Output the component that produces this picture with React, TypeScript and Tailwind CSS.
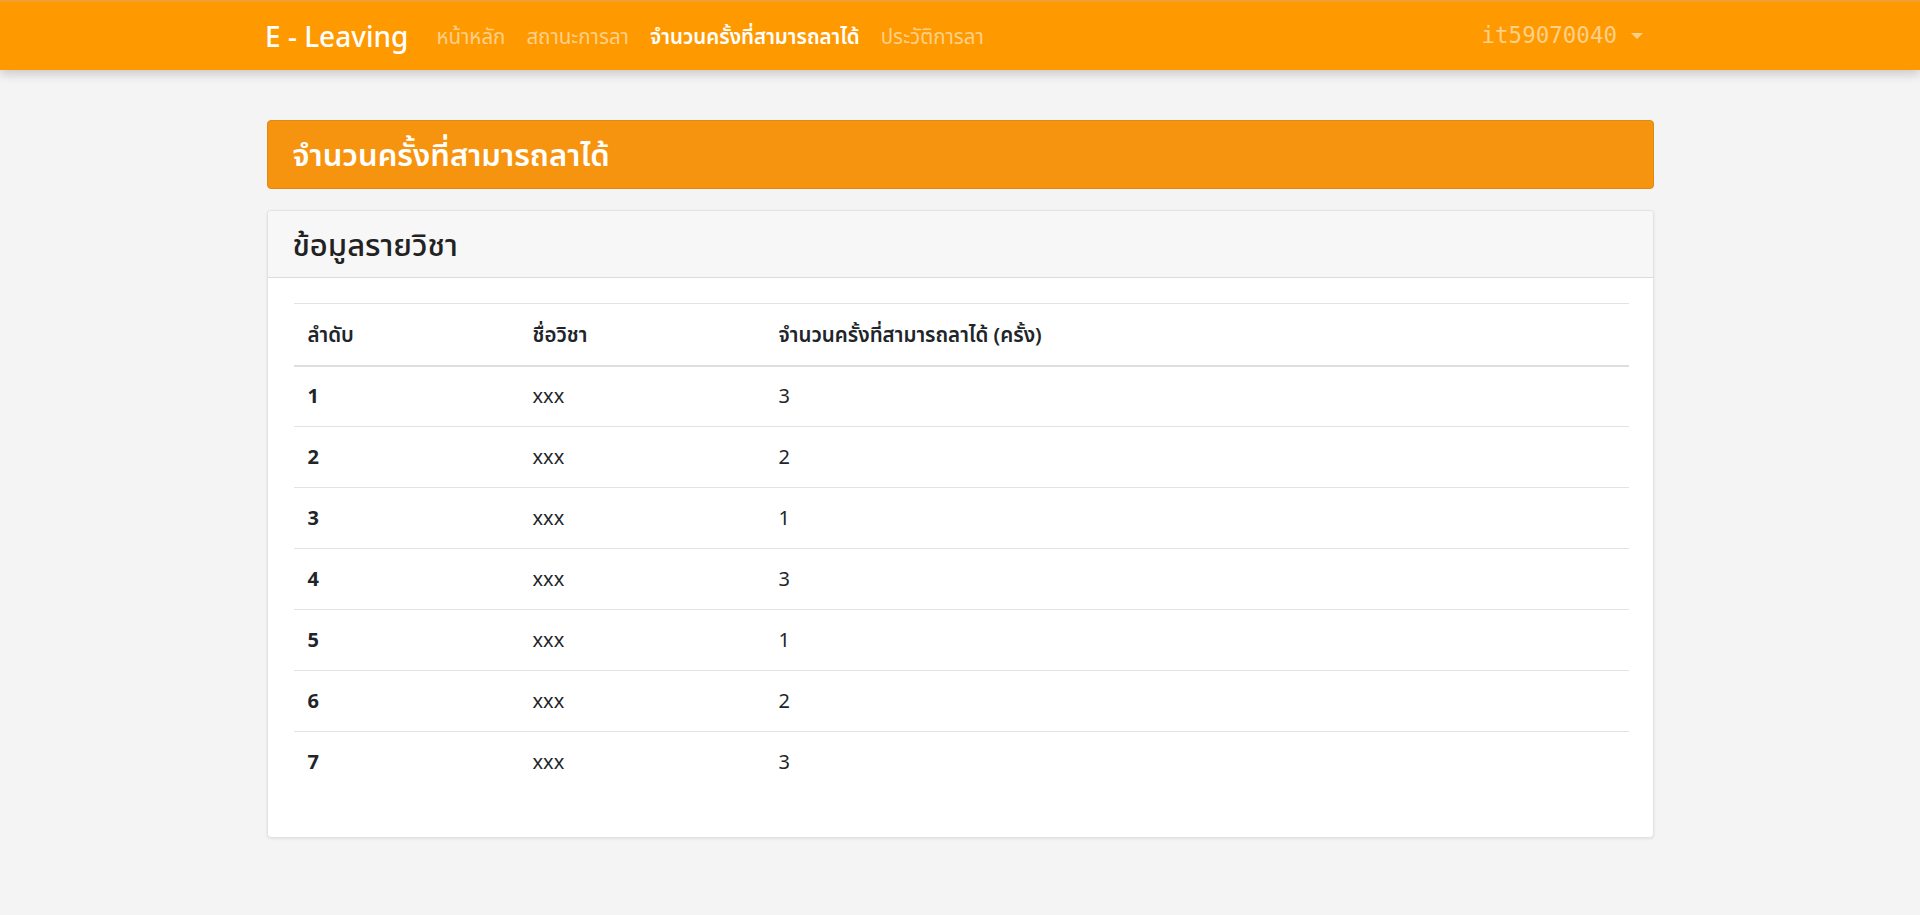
const NAV_LINKS = [
  { label: 'หน้าหลัก', active: false },
  { label: 'สถานะการลา', active: false },
  { label: 'จำนวนครั้งที่สามารถลาได้', active: true },
  { label: 'ประวัติการลา', active: false },
];

const ROWS = [
  { no: 1, name: 'xxx', count: 3 },
  { no: 2, name: 'xxx', count: 2 },
  { no: 3, name: 'xxx', count: 1 },
  { no: 4, name: 'xxx', count: 3 },
  { no: 5, name: 'xxx', count: 1 },
  { no: 6, name: 'xxx', count: 2 },
  { no: 7, name: 'xxx', count: 3 },
];

function Navbar() {
  return (
    <nav className="h-[70px] bg-[#ff9900] border-t-2 border-[#f0a030] shadow-[0_4px_10px_rgba(0,0,0,0.18)] relative z-10">
      <div className="mx-auto w-[1406px] h-full flex items-center pl-[8px] pr-[20px]">
        <span className="text-[28px] font-medium text-white mr-[28px] leading-none">E - Leaving</span>
        <ul className="flex items-center gap-[21px] text-[20.5px]">
          {NAV_LINKS.map((l) => (
            <li
              key={l.label}
              className={l.active ? 'text-white font-semibold' : 'text-[#ffd08a]'}
            >
              {l.label}
            </li>
          ))}
        </ul>
        <div className="ml-auto flex items-center gap-[14px] text-[#ffd08a]">
          <span className="text-[22.5px]" style={{ fontFamily: '"DejaVu Sans Mono", monospace' }}>it59070040</span>
          <span className="w-0 h-0 border-l-[6px] border-r-[6px] border-t-[6px] border-l-transparent border-r-transparent border-t-[#ffd08a]" />
        </div>
      </div>
    </nav>
  );
}

export default function App() {
  return (
    <div
      className="min-h-[915px] bg-[#f4f4f4] text-[#212529]"
      style={{ fontFamily: '"Noto Sans", "Noto Sans Thai", Loma, sans-serif' }}
    >
      <Navbar />

      <main className="mx-auto w-[1387px] pt-[50px]">
        {/* Page title banner */}
        <div className="h-[69px] rounded-[4px] bg-[#f7940f] border border-[#e08a10] flex items-center px-[25px]">
          <h1 className="text-[31px] font-semibold text-white">จำนวนครั้งที่สามารถลาได้</h1>
        </div>

        {/* Subject card */}
        <div className="mt-[21px] rounded-[4px] bg-white border border-[#e2e2e2] shadow-[0_1px_3px_rgba(0,0,0,0.08)]">
          <div className="h-[67px] bg-[#f7f7f7] border-b border-[#dcdcdc] flex items-center px-[25px] rounded-t-[4px]">
            <h2 className="text-[31px] font-medium text-[#222]">ข้อมูลรายวิชา</h2>
          </div>

          <div className="pt-[25px] pb-[44px] pl-[26px] pr-[24px]">
            <table className="w-full border-collapse text-[20px]">
              <thead>
                <tr className="border-t border-[#e3e3e3] border-b-2 border-b-[#dedede] h-[62px]">
                  <th className="w-[225px] text-left text-[20.5px] font-semibold px-[14px]">ลำดับ</th>
                  <th className="w-[246px] text-left text-[20.5px] font-semibold px-[14px]">ชื่อวิชา</th>
                  <th className="text-left text-[20.5px] font-semibold px-[14px]">จำนวนครั้งที่สามารถลาได้ (ครั้ง)</th>
                </tr>
              </thead>
              <tbody>
                {ROWS.map((r, i) => (
                  <tr
                    key={r.no}
                    className={i < ROWS.length - 1 ? 'h-[61px] border-b border-[#e3e3e3]' : 'h-[61px]'}
                  >
                    <td className="px-[14px] font-bold">{r.no}</td>
                    <td className="px-[14px]">{r.name}</td>
                    <td className="px-[14px]">{r.count}</td>
                  </tr>
                ))}
              </tbody>
            </table>
          </div>
        </div>
      </main>
    </div>
  );
}
